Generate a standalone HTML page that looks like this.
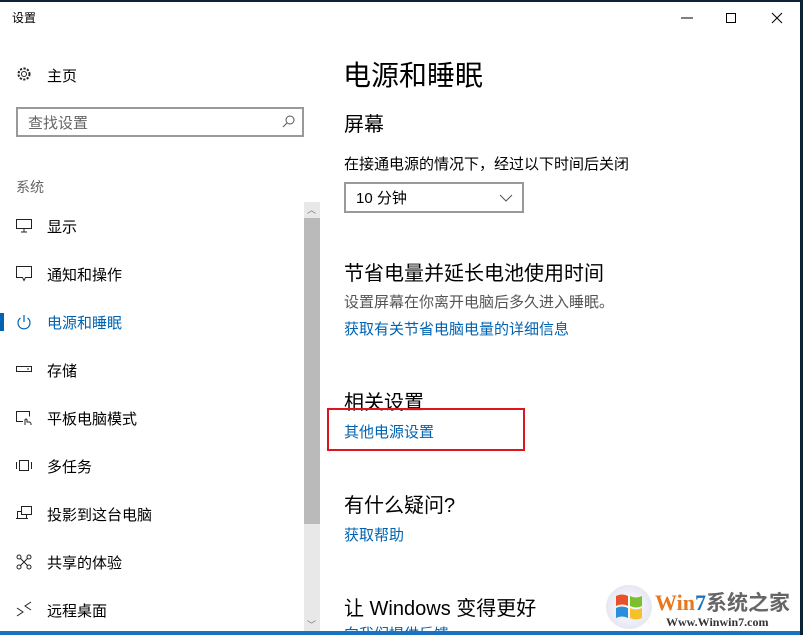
<!DOCTYPE html>
<html><head><meta charset="utf-8"><style>
*{margin:0;padding:0;box-sizing:border-box}
body{width:803px;height:635px;overflow:hidden;background:#fff;font-family:"Liberation Sans","Noto Sans CJK SC",sans-serif;position:relative;color:#000}
.a{position:absolute;white-space:nowrap}
.nav{font-size:15px;left:47px}
.ic{position:absolute;left:16px}
.lnk{color:#0063b1;font-size:15px}
</style></head><body>
<div class="a" style="left:0;top:0;width:803px;height:2px;background:#0e2236"></div>
<div class="a" style="left:800px;top:0;width:3px;height:635px;background:#0e2236"></div>
<div class="a" style="left:0;top:631px;width:800px;height:4px;background:#1a73c0"></div>
<div class="a" style="left:12px;top:9px;font-size:12px">设置</div>
<svg class="a" style="left:678px;top:10px" width="110" height="16"><line x1="3" y1="8" x2="15" y2="8" stroke="#000"/><rect x="48.5" y="3.5" width="9" height="9" fill="none" stroke="#000"/><path d="M94 3l10 10M104 3l-10 10" stroke="#000"/></svg>

<svg class="ic" style="top:66px" width="16" height="16" viewBox="0 0 16 16"><circle cx="8" cy="8" r="2.5" fill="none" stroke="#222"/><circle cx="8" cy="8" r="5.5" fill="none" stroke="#222" stroke-dasharray="2.2 1.4" stroke-width="2"/></svg>
<div class="a nav" style="top:65px">主页</div>
<div class="a" style="left:16px;top:107px;width:288px;height:30px;border:2px solid #999"></div>
<div class="a" style="left:28px;top:112px;font-size:15px;color:#666">查找设置</div>
<svg class="a" style="left:281px;top:114px" width="16" height="16"><circle cx="9" cy="6" r="4" fill="none" stroke="#555"/><line x1="6" y1="9" x2="2" y2="13" stroke="#555"/></svg>
<div class="a" style="left:16px;top:177px;font-size:14px;color:#666">系统</div>
<div class="a" style="left:304px;top:202px;width:16px;height:429px;background:#e8e8e8"></div>
<div class="a" style="left:304px;top:218px;width:16px;height:306px;background:#bababa"></div>
<div class="a" style="left:307px;top:203px;font-size:9px;color:#777">︿</div>
<div class="a" style="left:307px;top:618px;font-size:9px;color:#777">﹀</div>

<svg class="ic" style="top:219px" width="16" height="14"><rect x="0.5" y="0.5" width="15" height="9" fill="none" stroke="#222"/><line x1="8" y1="10" x2="8" y2="13" stroke="#222"/><line x1="5" y1="13" x2="11" y2="13" stroke="#222"/></svg>
<div class="a nav" style="top:216px">显示</div>
<svg class="ic" style="top:266px" width="16" height="16"><path d="M0.5 0.5h15v11h-6l-1.5 3-1.5-3h-6z" fill="none" stroke="#222"/></svg>
<div class="a nav" style="top:264px">通知和操作</div>
<div class="a" style="left:0;top:313px;width:4px;height:18px;background:#0063b1"></div>
<svg class="ic" style="top:314px" width="16" height="16"><path d="M4.5 4a6 6 0 1 0 7 0" fill="none" stroke="#0063b1" stroke-width="1.2"/><line x1="8" y1="1" x2="8" y2="8" stroke="#0063b1" stroke-width="1.2"/></svg>
<div class="a nav" style="top:312px;color:#0063b1">电源和睡眠</div>
<svg class="ic" style="top:366px" width="16" height="8"><rect x="0.5" y="0.5" width="15" height="5" fill="none" stroke="#222"/><line x1="11" y1="3" x2="13" y2="3" stroke="#222"/></svg>
<div class="a nav" style="top:360px">存储</div>
<svg class="ic" style="top:410px" width="16" height="16"><path d="M7 11.5H0.5v-10h13v5" fill="none" stroke="#222"/><path d="M9 15v-5a1 1 0 0 1 2 0v2h2a2 2 0 0 1 2 2v1" fill="none" stroke="#222"/></svg>
<div class="a nav" style="top:408px">平板电脑模式</div>
<svg class="ic" style="top:460px" width="16" height="12"><rect x="3.5" y="0.5" width="9" height="10" fill="none" stroke="#222"/><path d="M0.5 2v7M15.5 2v7" stroke="#222"/></svg>
<div class="a nav" style="top:456px">多任务</div>
<svg class="ic" style="top:506px" width="16" height="16"><rect x="5.5" y="0.5" width="10" height="8" fill="none" stroke="#222"/><path d="M5 5.5H1.5v7h9v-4" fill="none" stroke="#222"/><line x1="0" y1="12.5" x2="12" y2="12.5" stroke="#222"/></svg>
<div class="a nav" style="top:504px">投影到这台电脑</div>
<svg class="ic" style="top:554px" width="16" height="16"><circle cx="3" cy="3" r="2" fill="none" stroke="#222"/><circle cx="13" cy="3" r="2" fill="none" stroke="#222"/><circle cx="3" cy="13" r="2" fill="none" stroke="#222"/><circle cx="13" cy="13" r="2" fill="none" stroke="#222"/><path d="M4.5 4.5l7 7M11.5 4.5l-7 7" stroke="#222"/></svg>
<div class="a nav" style="top:552px">共享的体验</div>
<svg class="ic" style="top:601px" width="16" height="16"><path d="M1 7l6 4-6 4M15 1l-6 4 6 4" fill="none" stroke="#222"/></svg>
<div class="a nav" style="top:600px">远程桌面</div>

<div class="a" style="left:343px;top:54px;font-size:28px">电源和睡眠</div>
<div class="a" style="left:344px;top:108px;font-size:20px">屏幕</div>
<div class="a" style="left:344px;top:153px;font-size:15px">在接通电源的情况下，经过以下时间后关闭</div>
<div class="a" style="left:344px;top:182px;width:180px;height:31px;border:2px solid #999"></div>
<div class="a" style="left:356px;top:187px;font-size:15px">10 分钟</div>
<svg class="a" style="left:499px;top:194px" width="14" height="8"><path d="M1 1l6 6 6-6" fill="none" stroke="#555"/></svg>
<div class="a" style="left:344px;top:257px;font-size:20px">节省电量并延长电池使用时间</div>
<div class="a" style="left:344px;top:291px;font-size:15px;color:#555">设置屏幕在你离开电脑后多久进入睡眠。</div>
<div class="a lnk" style="left:344px;top:318px">获取有关节省电脑电量的详细信息</div>
<div class="a" style="left:344px;top:386px;font-size:20px">相关设置</div>
<div class="a lnk" style="left:344px;top:421px">其他电源设置</div>
<div class="a" style="left:327px;top:408px;width:198px;height:43px;border:2px solid #e0141c"></div>
<div class="a" style="left:344px;top:489px;font-size:20px">有什么疑问?</div>
<div class="a lnk" style="left:344px;top:524px">获取帮助</div>
<div class="a" style="left:344px;top:592px;font-size:20px">让 Windows 变得更好</div>
<div class="a lnk" style="left:344px;top:625px;height:6px;overflow:hidden;line-height:20px">向我们提供反馈</div>

<div class="a" style="left:606px;top:585px;width:46px;height:44px;border-radius:50%;background:radial-gradient(#fff,#dde);"></div>
<svg class="a" style="left:614px;top:592px" width="30" height="30"><path d="M2 4q6-3 12 0v10q-6-3-12 0z" fill="#e8522a"/><path d="M16 4q6 3 12 0v10q-6 3-12 0z" fill="#7bbf2f"/><path d="M2 16q6-3 12 0v10q-6-3-12 0z" fill="#2a8fd8"/><path d="M16 16q6 3 12 0v10q-6 3-12 0z" fill="#f5c02a"/></svg>
<div class="a" style="left:655px;top:587px;font-size:22px;font-weight:bold;font-family:'Liberation Serif',serif;color:#e87722">Win<span style="color:#1a73c0">7</span><span style="color:#666;font-family:'Noto Sans CJK SC',sans-serif;font-size:21px">系统之家</span></div>
<div class="a" style="left:666px;top:615px;font-size:12px;font-weight:bold;font-family:'Liberation Serif',serif;color:#333">Www.Winwin7.com</div>
</body></html>
